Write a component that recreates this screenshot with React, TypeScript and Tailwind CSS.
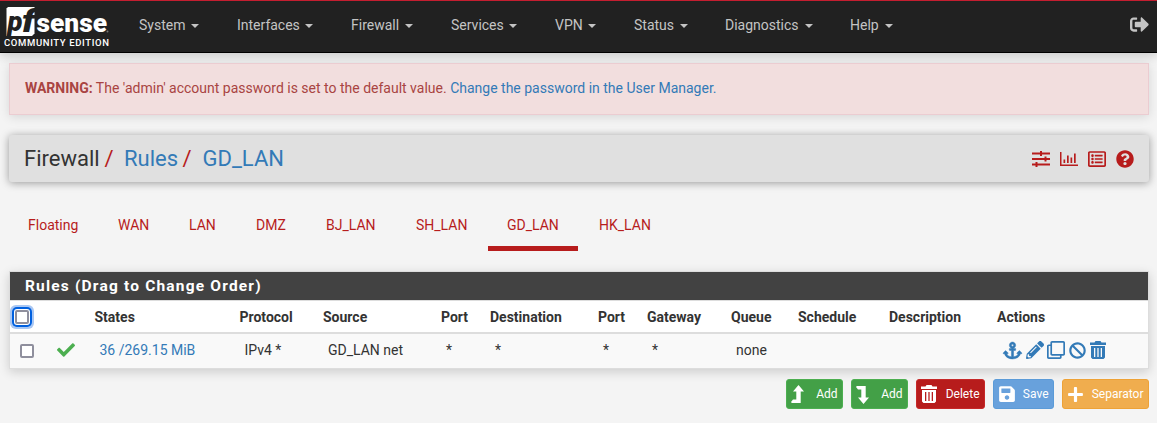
import type { ReactNode } from "react";
import {
  FaSignOutAlt,
  FaRegListAlt,
  FaQuestionCircle,
  FaCheck,
  FaAnchor,
  FaPencilAlt,
  FaRegClone,
  FaBan,
  FaSave,
  FaPlus,
} from "react-icons/fa";

const menu = [
  { label: "System", width: "w-[98px]", text: "w-[47px]" },
  { label: "Interfaces", width: "w-[114px]", text: "w-[63px]" },
  { label: "Firewall", width: "w-[100px]", text: "w-[49px]" },
  { label: "Services", width: "w-[104px]", text: "w-[53px]" },
  { label: "VPN", width: "w-[79px]", text: "w-[28px]" },
  { label: "Status", width: "w-[91px]", text: "w-[41px]" },
  { label: "Diagnostics", width: "w-[125px]", text: "w-[75px]" },
  { label: "Help", width: "w-[60px]", text: "w-[30px]" },
];

const tabs = [
  { label: "Floating", width: "w-[90px]" },
  { label: "WAN", width: "w-[71px]" },
  { label: "LAN", width: "w-[67px]" },
  { label: "DMZ", width: "w-[70px]" },
  { label: "BJ_LAN", width: "w-[90px]" },
  { label: "SH_LAN", width: "w-[91px]" },
  { label: "GD_LAN", width: "w-[90px]", active: true },
  { label: "HK_LAN", width: "w-[94px] ml-[2px]" },
];

const columns = ["States", "Protocol", "Source", "Port", "Destination", "Port", "Gateway", "Queue", "Schedule", "Description", "Actions"];
const values = ["36 /269.15 MiB", "IPv4 *", "GD_LAN net", "*", "*", "*", "*", "none", "", ""];

const gridCols = "grid grid-cols-[47px_37.5px_145px_83.5px_118px_49px_108px_49px_84px_67px_91px_108px_1fr] items-center";

function Logo() {
  return (
    <svg width="116" height="51" viewBox="0 0 116 51" fill="#fff">
      <path d="M8 6h26.500v26.500l-2.500 2.500H6.500V7.500z" />
      <text x="7.500" y="30" fontFamily="Roboto, sans-serif" fontWeight="900" fontStyle="italic" fontSize="27" textLength="15" lengthAdjust="spacingAndGlyphs" fill="#212121">p</text>
      <text x="22" y="31" fontFamily="Roboto, sans-serif" fontWeight="900" fontStyle="italic" fontSize="31" textLength="13" lengthAdjust="spacingAndGlyphs" fill="#212121">f</text>
      <text x="36.500" y="30.500" fontFamily="Roboto, sans-serif" fontWeight="900" fontSize="26.500" textLength="70.500" lengthAdjust="spacingAndGlyphs">sense</text>
      <circle cx="107.500" cy="30.500" r="1" fill="#777" />
      <text x="4" y="45" fontFamily="Roboto, sans-serif" fontWeight="500" fontSize="9.500" textLength="105" lengthAdjust="spacing">COMMUNITY EDITION</text>
    </svg>
  );
}

function TrashIcon({ className }: { className: string }) {
  return (
    <svg className={className} viewBox="0 0 16 18" fill="currentColor">
      <path fillRule="evenodd" d="M0 1.500h4.500L5.500 0h5l1 1.500H16V4H0zM1 5h14v11.500L13.500 18h-11L1 16.500zM4 7v9h1.300V7zM7.350 7v9h1.300V7zM10.700 7v9H12V7z" />
    </svg>
  );
}

function LevelIcon({ down = false }: { down?: boolean }) {
  return (
    <svg className={down ? "h-[19px] w-[13px] -scale-y-100" : "h-[19px] w-[13px]"} viewBox="0 0 13 19" fill="currentColor">
      <path d="M7.500 0L13 6.500H9.700V18H.8L0 17l2-2.500h3.300v-8H2z" />
    </svg>
  );
}

function SlidersIcon() {
  return (
    <svg width="18" height="16" viewBox="0 0 18 16" fill="currentColor">
      <path d="M0 1.500h18v2H0zM0 7h18v2H0zM0 12.500h18v2H0z" />
      <path d="M8 0h2v5H8zM12.500 5.500h2v5h-2zM3.500 11h2v5h-2z" />
    </svg>
  );
}

function ChartIcon() {
  return (
    <svg width="18" height="14" viewBox="0 0 18 14" fill="currentColor">
      <path d="M0 0h1.500v12.500H18V14H0zM3.500 7.500h1.700V11H3.500zM7 3.500h1.700V11H7zM10.500 5.500h1.700V11h-1.700zM14 1.500h1.700V11H14z" />
    </svg>
  );
}

function ActionButton({ icon, label, className }: { icon: ReactNode; label: string; className: string }) {
  return (
    <button className={`flex h-[30px] items-center rounded-[3px] border pr-[4.5px] pl-1 text-[12px] text-white ${className}`}>
      {icon}
      <span className="ml-auto whitespace-nowrap">{label}</span>
    </button>
  );
}

export default function App() {
  return (
    <div className="h-[423px] w-full overflow-hidden bg-[#f4f4f4] font-[Roboto,sans-serif] text-[13px] leading-[18px] text-[#333]">
      <header className="flex h-[53px] border-t border-b border-t-[#c41e30] border-b-black bg-[#212121] text-[14px] text-[#c4c4c4] shadow-[0_3px_10px_rgba(0,0,0,0.18)]">
        <div className="w-[139px]">
          <Logo />
        </div>
        <nav className="flex pt-[14px]">
          {menu.map((item) => (
            <a key={item.label} className={`flex h-5 items-center gap-[5px] ${item.width}`}>
              <span className={`whitespace-nowrap ${item.text}`}>{item.label}</span>
              <span className="mt-[2px] border-x-4 border-t-4 border-x-transparent border-t-current" />
            </a>
          ))}
        </nav>
        <FaSignOutAlt className="mt-[14px] mr-2 ml-auto h-[19px] w-[19px]" />
      </header>

      <main className="pr-2 pl-[9px]">
        <div className="mt-[10px] flex h-[52px] items-center border border-[#ebccd1] bg-[#f2dede] pb-[2px] pl-[15px] text-[14px] text-[#a94442] shadow-[0_2px_10px_rgba(0,0,0,0.12)]">
          <p className="whitespace-nowrap">
            <b>WARNING:</b> The 'admin' account password is set to the default value.{" "}
            <a className="text-[#337ab7]">Change the password in the User Manager.</a>
          </p>
        </div>

        <div className="mt-[20px] flex h-[47px] items-center rounded-[3px] bg-[#e0e0e0] px-[15px] text-[22px] shadow-[0_1px_8px_rgba(0,0,0,0.38)]">
          <span className="w-[80.5px] whitespace-nowrap text-[#333]">Firewall</span>
          <span className="w-[19.5px] text-[#b71c1c]">/</span>
          <a className="w-[58.5px] text-[#337ab7]">Rules</a>
          <span className="w-[20px] text-[#b71c1c]">/</span>
          <a className="text-[#337ab7]">GD_LAN</a>
          <div className="ml-auto flex items-center gap-[10px] pt-px text-[#b71c1c]">
            <SlidersIcon />
            <ChartIcon />
            <FaRegListAlt className="size-[18px]" />
            <FaQuestionCircle className="size-[18px]" />
          </div>
        </div>

        <div className="mt-[20px] flex h-[49px] text-[14px] text-[#b71c1c]">
          {tabs.map((tab) => (
            <a key={tab.label} className={`border-b-[5px] pt-[14px] pl-[19px] ${tab.active ? "border-[#b71c1c]" : "border-transparent"} ${tab.width}`}>
              {tab.label}
            </a>
          ))}
        </div>

        <section className="mt-5 h-[98px] border border-[#ddd] bg-white shadow-[0_3px_10px_rgba(0,0,0,0.16)]">
          <h2 className="flex h-7 items-center bg-[#424242] pl-[15px] text-[15.5px] font-bold tracking-[1.18px] text-white">Rules (Drag to Change Order)</h2>
          <div className={`h-[34px] border-t border-b-2 border-[#ddd] pt-px text-[14px] font-bold ${gridCols}`}>
            <span className="ml-[5px] size-[14px] rounded-[2px] border-2 border-[#8f8f9d] bg-white shadow-[0_0_0_1px_white,0_0_0_3px_#0060df,0_0_0_5px_#a9c7f3]" />
            <span />
            {columns.map((name, i) => (
              <span key={i}>{name}</span>
            ))}
          </div>
          <div className={`h-[34px] bg-[#f9f9f9] pb-[2px] text-[14px] ${gridCols}`}>
            <span className="mt-[2px] ml-[10px] size-[14px] rounded-[2px] border-2 border-[#8f8f9d] bg-white" />
            <FaCheck className="size-[18px] text-[#4caf50]" />
            {values.map((value, i) => (
              <span key={i} className={`pl-[5px] whitespace-nowrap ${i === 0 ? "text-[#337ab7]" : ""}`}>{value}</span>
            ))}
            <span className="flex items-center pl-[5.5px] text-[#337ab7]">
              <FaAnchor className="mr-[4px] size-[19px] overflow-visible" stroke="currentColor" strokeWidth="14" />
              <FaPencilAlt className="mr-[3px] size-[18px]" />
              <FaRegClone className="mr-[4px] size-[18px]" />
              <FaBan className="mr-[4px] size-[17px]" />
              <TrashIcon className="h-[18px] w-[16px]" />
            </span>
          </div>
        </section>

        <div className="mt-[10px] flex justify-end gap-2">
          <ActionButton label="Add" className="w-[57px] border-[#4caf50] bg-[#43a047]" icon={<LevelIcon />} />
          <ActionButton label="Add" className="w-[57px] border-[#4caf50] bg-[#43a047]" icon={<LevelIcon down />} />
          <ActionButton label="Delete" className="w-[69px] border-[#c62828] bg-[#b71c1c]" icon={<TrashIcon className="h-[18px] w-[16px]" />} />
          <ActionButton label="Save" className="w-[61px] border-[#5b9bd8] bg-[#68a1dc]" icon={<FaSave className="size-[18px]" />} />
          <ActionButton label="Separator" className="w-[87px] border-[#eea236] bg-[#f0ad4e]" icon={<FaPlus className="size-[17px]" />} />
        </div>
      </main>
    </div>
  );
}
